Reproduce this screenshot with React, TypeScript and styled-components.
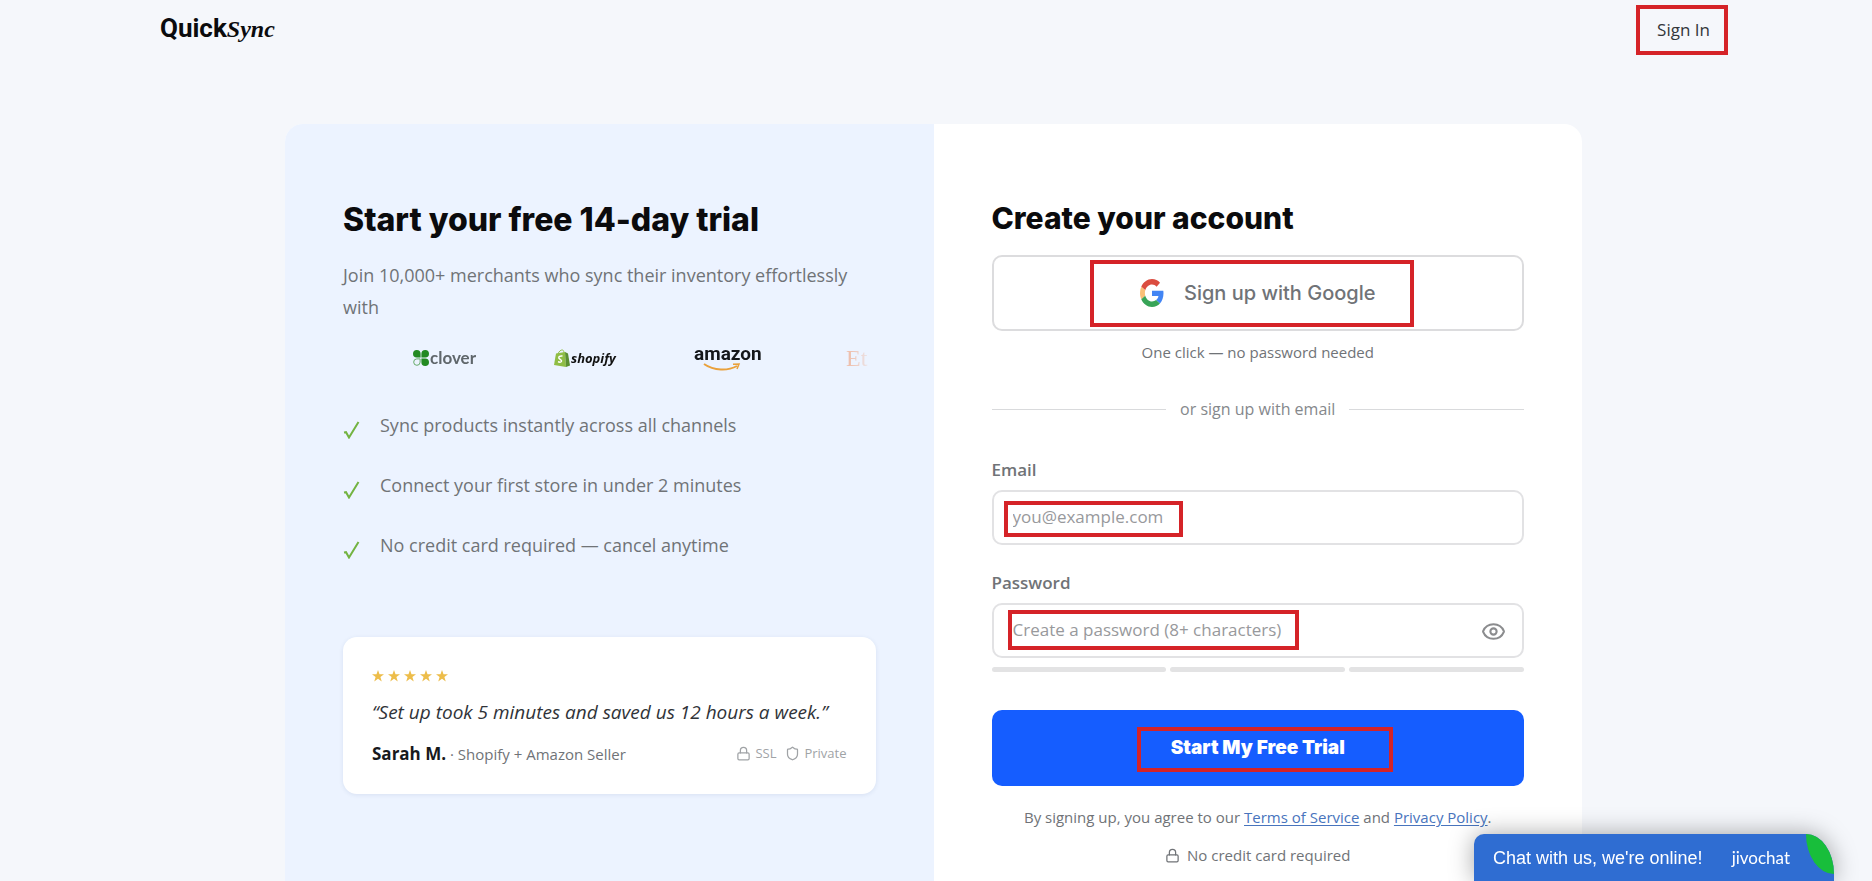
import React, { useState } from "react";
import styled, { createGlobalStyle } from "styled-components";
import { Eye, Lock, Shield } from "lucide-react";

const body = '"Open Sans", "Noto Sans", sans-serif';
const display = 'Inter, "Open Sans", sans-serif';

const GlobalStyle = createGlobalStyle`
  *, *::before, *::after { box-sizing: border-box; }
  body { margin: 0; background: #f5f7fb; font-family: ${body}; color: #707377; }
  h1, h2, p, ul, blockquote { margin: 0; padding: 0; }
  button, input { font: inherit; }
`;

const Page = styled.div`
  display: flex;
  flex-direction: column;
  height: 100vh;
  min-height: 880px;
  overflow: hidden;
  padding-right: 5px;
`;

const Header = styled.header`
  display: flex;
  justify-content: space-between;
  align-items: flex-start;
  padding: 5px 139px 0 160px;
  height: 124px;
  flex: none;
`;

const Brand = styled.a`
  display: flex;
  align-items: baseline;
  color: #0b0b0d;
  text-decoration: none;
  font: 700 26px/46px Roboto, sans-serif;
`;

const BrandScript = styled.span`
  font: italic 700 24px/46px "Liberation Serif", serif;
`;

const Marked = styled.span<{ $w: number; $h: number; $x?: number; $y?: number }>`
  position: absolute;
  left: ${(p) => p.$x ?? 0}px;
  top: ${(p) => p.$y ?? 0}px;
  width: ${(p) => p.$w}px;
  height: ${(p) => p.$h}px;
  border: 4px solid #d52328;
  pointer-events: none;
`;

const SignIn = styled.a`
  position: relative;
  width: 92px;
  line-height: 50px;
  text-align: center;
  padding-left: 3px;
  color: #33363a;
  font-size: 17px;
  text-decoration: none;
`;

const Card = styled.main`
  display: grid;
  grid-template-columns: 1fr 1fr;
  flex: 1;
  width: 100%;
  max-width: 1297px;
  margin: 0 auto;
  border-radius: 18px 18px 0 0;
  overflow: hidden;
  background: #fff;
`;

const Pitch = styled.section`
  background: #ecf3ff;
  padding: 72px 58px 0;
  min-width: 0;
`;

const Title = styled.h1`
  font: 800 32px/48px ${display};
  color: #0b0b0d;
  white-space: nowrap;
`;

const Lead = styled.p`
  margin-top: 15px;
  font-size: 18px;
  line-height: 32px;
`;

const Marquee = styled.div`
  display: flex;
  align-items: center;
  height: 36px;
  margin-top: 17px;
  padding-left: 70px;
  overflow: hidden;
  mask-image: linear-gradient(to right, transparent, #000 12%, #000 88%, transparent);
`;

const Logo = styled.div<{ $width: number }>`
  display: flex;
  align-items: center;
  flex: none;
  gap: 1px;
  width: ${(p) => p.$width}px;
  white-space: nowrap;
`;

const CloverName = styled.span`
  font: 700 17px/20px Lato, sans-serif;
  color: #5f666b;
`;
const ShopifyName = styled.span`
  font: italic 700 13px/20px "Open Sans", sans-serif;
  color: #111;
`;
const AmazonMark = styled.div`
  display: flex;
  flex-direction: column;
`;
const AmazonName = styled.span`
  font: 700 19px/18px Roboto, sans-serif;
  color: #15171a;
`;
const EtsyName = styled.span`
  font: 400 24px/28px "Liberation Serif", serif;
  color: #f0783c;
`;

const Benefits = styled.ul`
  display: flex;
  flex-direction: column;
  gap: 28px;
  margin-top: 33px;
  list-style: none;
`;

const Benefit = styled.li`
  display: flex;
  gap: 20px;
  font-size: 18px;
  line-height: 32px;
  svg { margin-top: 12px; }
`;

const Quote = styled.blockquote`
  margin-top: 76px;
  height: 157px;
  padding: 28px 29px;
  border-radius: 14px;
  background: #fff;
  box-shadow: 0 1px 4px rgba(40, 70, 130, 0.1);
`;

const Stars = styled.div`
  display: flex;
  gap: 4px;
  height: 22px;
  align-items: center;
`;

const QuoteText = styled.p`
  margin-top: 10px;
  font-size: 19px;
  line-height: 30px;
  font-style: italic;
  color: #303338;
  white-space: nowrap;
`;

const QuoteFooter = styled.footer`
  display: flex;
  justify-content: space-between;
  margin-top: 15px;
  font-size: 15px;
  line-height: 24px;
  white-space: nowrap;
  strong { color: #17191c; font-size: 17px; }
`;

const Trust = styled.span`
  display: flex;
  align-items: center;
  gap: 4px;
  height: 22px;
  font-size: 13px;
  color: #a0a3a6;
  svg:nth-of-type(2) { margin-left: 5px; }
`;

const Signup = styled.section`
  display: flex;
  flex-direction: column;
  padding: 70px 58px 0;
  min-width: 0;
`;

const FormTitle = styled.h2`
  font: 800 30px/48px ${display};
  color: #0b0b0d;
`;

const GoogleButton = styled.button`
  position: relative;
  display: flex;
  align-items: center;
  justify-content: center;
  gap: 20px;
  height: 76px;
  margin-top: 13px;
  flex: none;
  border: 2px solid #dcdcde;
  border-radius: 10px;
  background: #fff;
  color: #707377;
  font: 500 20px/28px ${display};
`;

const Note = styled.p<{ $top: number }>`
  display: flex;
  justify-content: center;
  align-items: center;
  gap: 7px;
  margin-top: ${(p) => p.$top}px;
  font-size: 15px;
  line-height: 24px;
`;

const Terms = styled.p`
  margin-top: 19px;
  font-size: 15px;
  line-height: 24px;
  text-align: center;
  a { color: #4874bd; text-underline-offset: 2px; }
`;

const Divider = styled.div`
  display: flex;
  align-items: center;
  gap: 14px;
  margin-top: 33px;
  font-size: 16px;
  line-height: 24px;
  color: #85888c;
  &::before, &::after { content: ""; flex: 1; height: 1px; background: #d9dadc; }
`;

const Form = styled.form`
  display: flex;
  flex-direction: column;
  gap: 26px;
  margin-top: 37px;
`;

const Label = styled.label`
  font-size: 17px;
  line-height: 24px;
  font-weight: 600;
`;

const Group = styled.div`
  display: flex;
  flex-direction: column;
`;

const Field = styled.div`
  position: relative;
  margin-top: 8px;
`;

const Input = styled.input`
  display: block;
  width: 100%;
  height: 55px;
  padding: 0 56px 2px 19px;
  border: 2px solid #e2e2e4;
  border-radius: 10px;
  background: #fff;
  font-size: 17px;
  color: #303338;
  outline: none;
  &::placeholder { color: #98999c; opacity: 1; }
`;

const Reveal = styled.button`
  position: absolute;
  right: 18px;
  top: 16px;
  padding: 0;
  border: 0;
  background: none;
  color: #8b8c8e;
  svg { display: block; }
`;

const Strength = styled.div`
  display: grid;
  grid-template-columns: repeat(3, 1fr);
  gap: 4px;
  margin-top: 9px;
  span { height: 5px; border-radius: 3px; background: #e3e3e4; }
`;

const Submit = styled.button`
  position: relative;
  height: 76px;
  margin-top: 12px;
  border: 0;
  border-radius: 10px;
  background: #155dff;
  color: #fff;
  font: 900 19px/28px ${display};
`;

const Chat = styled.button`
  position: fixed;
  right: 38px;
  bottom: 0;
  display: flex;
  align-items: center;
  width: 360px;
  height: 47px;
  padding: 0 44px 0 19px;
  justify-content: space-between;
  border: 0;
  border-radius: 10px 28px 0 0 / 10px 40px 0 0;
  background: #2f6dd2;
  color: #fff;
  box-shadow: 0 0 24px rgba(0, 0, 0, 0.35);
  font: 400 18px/24px "Liberation Sans", Arial, sans-serif;
`;

const ChatBrand = styled.span`
  font: 400 17px/24px Lato, sans-serif;
`;

const Leaf = styled.span`
  position: absolute;
  right: 0;
  top: 0;
  width: 28px;
  height: 40px;
  border-radius: 0 28px 0 28px / 0 40px 0 40px;
  background: #18be3b;
`;

const Check = () => (
  <svg width="17" height="18" viewBox="0 0 17 18" fill="none" aria-hidden="true">
    <path d="M1 11.500 3 11.200 6 16.500 15.500 1" stroke="#73b342" strokeWidth="2" />
  </svg>
);

const Star = () => (
  <svg width="12" height="12" viewBox="0 0 24 24" fill="#edbd4a" aria-hidden="true">
    <path d="M12 0l3 8.500h9l-7.200 5.500 2.700 9L12 17.500 4.500 23l2.700-9L0 8.500h9z" />
  </svg>
);

const GoogleIcon = () => (
  <svg width="24" height="28" viewBox="0 0 48 48" preserveAspectRatio="none" aria-hidden="true">
    <path fill="#db4d40" d="M24 9.500c3.540 0 6.710 1.220 9.210 3.600l6.850-6.850C35.900 2.380 30.470 0 24 0 14.620 0 6.510 5.380 2.560 13.220l7.980 6.190C12.430 13.720 17.740 9.500 24 9.500z" />
    <path fill="#4285f4" d="M46.980 24.550c0-1.570-.15-3.090-.38-4.550H24v9.020h12.940c-.58 2.960-2.260 5.480-4.780 7.180l7.730 6c4.510-4.180 7.090-10.360 7.090-17.650z" />
    <path fill="#fbc078" d="M10.530 28.590c-.48-1.450-.76-2.990-.76-4.590s.27-3.140.76-4.590l-7.980-6.190C.92 16.460 0 20.120 0 24s.92 7.540 2.560 10.780l7.970-6.190z" />
    <path fill="#38a457" d="M24 48c6.480 0 11.930-2.130 15.890-5.810l-7.730-6c-2.150 1.450-4.920 2.300-8.160 2.300-6.260 0-11.570-4.220-13.470-9.910l-7.980 6.190C6.510 42.620 14.620 48 24 48z" />
  </svg>
);

const CloverIcon = () => (
  <svg width="16" height="16" viewBox="0 0 16 16" aria-hidden="true">
    <path fill="#238a22" d="M7.600 7.600H3.800A3.800 3.800 0 1 1 7.600 3.800zM8.400 7.600V3.800A3.800 3.800 0 1 1 12.200 7.600zM8.400 8.400h3.800a3.800 3.800 0 1 1-3.800 3.800z" />
    <path fill="none" stroke="#65aa69" d="M7.100 8.900H3.800A3.200 3.200 0 1 0 7.100 12.200z" />
  </svg>
);

const ShopifyIcon = () => (
  <svg width="16" height="18" viewBox="0 0 16 18" aria-hidden="true">
    <path fill="#8fbd45" d="M2 4.500 11 3l1 15L0 16z" />
    <path fill="#5b8f31" d="M11 3l3 1.500L16 16.500 12 18z" />
    <path fill="none" stroke="#8fbd45" d="M4 5C5 2 7 .8 8.500 1S10 4 10 4" />
    <path fill="none" stroke="#fff" strokeWidth="1.500" d="M8.500 7C4 6.500 4 9 6.200 10.300S8 14 4 12.800" />
  </svg>
);

const Smile = () => (
  <svg width="68" height="8" viewBox="0 0 68 8" fill="none" stroke="#e9a13c" aria-hidden="true">
    <path strokeWidth="2" d="M10 1C20 8 34 8 43 3" />
    <path strokeWidth="1.500" d="M39 1.200 45 1 43 6" />
  </svg>
);

const benefits = [
  "Sync products instantly across all channels",
  "Connect your first store in under 2 minutes",
  "No credit card required — cancel anytime",
];

export default function App() {
  const [visible, setVisible] = useState(false);
  return (
    <>
      <GlobalStyle />
      <Page>
        <Header>
          <Brand href="#">Quick<BrandScript>Sync</BrandScript></Brand>
          <SignIn href="#signin">Sign In<Marked $w={92} $h={50} /></SignIn>
        </Header>
        <Card>
          <Pitch>
            <Title>Start your free 14-day trial</Title>
            <Lead>Join 10,000+ merchants who sync their inventory effortlessly with</Lead>
            <Marquee>
              <Logo $width={141}><CloverIcon /><CloverName>clover</CloverName></Logo>
              <Logo $width={140}><ShopifyIcon /><ShopifyName>shopify</ShopifyName></Logo>
              <Logo $width={152}><AmazonMark><AmazonName>amazon</AmazonName><Smile /></AmazonMark></Logo>
              <Logo $width={28}><EtsyName>Et</EtsyName></Logo>
            </Marquee>
            <Benefits>
              {benefits.map((text) => <Benefit key={text}><Check />{text}</Benefit>)}
            </Benefits>
            <Quote>
              <Stars role="img" aria-label="5 stars"><Star /><Star /><Star /><Star /><Star /></Stars>
              <QuoteText>“Set up took 5 minutes and saved us 12 hours a week.”</QuoteText>
              <QuoteFooter>
                <span><strong>Sarah M.</strong> · Shopify + Amazon Seller</span>
                <Trust><Lock size={15} />SSL <Shield size={15} />Private</Trust>
              </QuoteFooter>
            </Quote>
          </Pitch>
          <Signup>
            <FormTitle>Create your account</FormTitle>
            <GoogleButton type="button">
              <GoogleIcon />Sign up with Google
              <Marked $x={96} $y={3} $w={324} $h={67} />
            </GoogleButton>
            <Note $top={9}>One click — no password needed</Note>
            <Divider>or sign up with email</Divider>
            <Form onSubmit={(e) => e.preventDefault()}>
              <Group>
                <Label htmlFor="email">Email</Label>
                <Field>
                  <Input id="email" type="email" placeholder="you@example.com" />
                  <Marked $x={12} $y={11} $w={179} $h={36} />
                </Field>
              </Group>
              <Group>
                <Label htmlFor="password">Password</Label>
                <Field>
                  <Input id="password" type={visible ? "text" : "password"} placeholder="Create a password (8+ characters)" />
                  <Marked $x={16} $y={7} $w={291} $h={40} />
                  <Reveal type="button" aria-label="Show password" onClick={() => setVisible(!visible)}><Eye size={25} /></Reveal>
                </Field>
                <Strength><span /><span /><span /></Strength>
              </Group>
              <Submit type="submit">Start My Free Trial<Marked $x={145} $y={17} $w={256} $h={45} /></Submit>
            </Form>
            <Terms>By signing up, you agree to our <a href="#terms">Terms of Service</a> and <a href="#privacy">Privacy Policy</a>.</Terms>
            <Note $top={14}><Lock size={15} />No credit card required</Note>
          </Signup>
        </Card>
        <Chat type="button">
          Chat with us, we're online!
          <ChatBrand>jivochat</ChatBrand>
          <Leaf />
        </Chat>
      </Page>
    </>
  );
}
